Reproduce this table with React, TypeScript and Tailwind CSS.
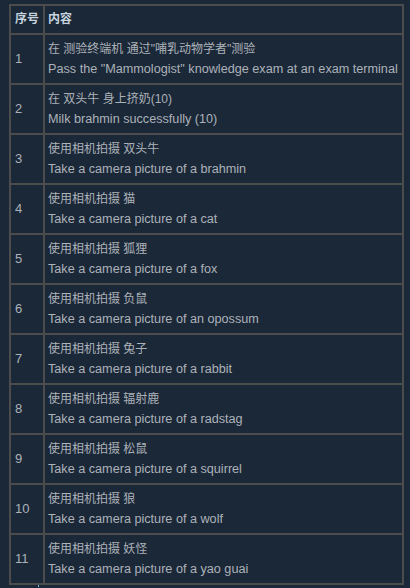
import React from "react";

const rows: [string, string, string][] = [
  ["1", "在 测验终端机 通过\"哺乳动物学者\"测验", "Pass the \"Mammologist\" knowledge exam at an exam terminal"],
  ["2", "在 双头牛 身上挤奶(10)", "Milk brahmin successfully (10)"],
  ["3", "使用相机拍摄 双头牛", "Take a camera picture of a brahmin"],
  ["4", "使用相机拍摄 猫", "Take a camera picture of a cat"],
  ["5", "使用相机拍摄 狐狸", "Take a camera picture of a fox"],
  ["6", "使用相机拍摄 负鼠", "Take a camera picture of an opossum"],
  ["7", "使用相机拍摄 兔子", "Take a camera picture of a rabbit"],
  ["8", "使用相机拍摄 辐射鹿", "Take a camera picture of a radstag"],
  ["9", "使用相机拍摄 松鼠", "Take a camera picture of a squirrel"],
  ["10", "使用相机拍摄 狼", "Take a camera picture of a wolf"],
  ["11", "使用相机拍摄 妖怪", "Take a camera picture of a yao guai"],
];

export default function App() {
  return (
    <div
      className="min-h-[588px] w-[410px] bg-[#1b2838] pl-[9px] pt-[4px] text-[#acb2b8]"
      style={{ fontFamily: '"Liberation Sans", Arial, "Noto Sans CJK SC", sans-serif' }}
    >
      <table className="border-separate border-spacing-0 border border-[#4c4c4c] text-[12px]">
        <thead>
          <tr>
            <th className="border border-[#4c4c4c] px-[4px] py-[4px] text-left font-bold leading-[19px] text-[#c6d4df]">序号</th>
            <th className="border border-[#4c4c4c] pl-[3px] pr-[4px] py-[4px] text-left font-bold leading-[19px] text-[#c6d4df]">内容</th>
          </tr>
        </thead>
        <tbody>
          {rows.map(([n, zh, en]) => (
            <tr key={n}>
              <td className="border border-[#4c4c4c] px-[4px] py-[4px] align-middle text-[13px] leading-[20px]">{n}</td>
              <td className="border border-[#4c4c4c] pl-[3px] pr-[4px] py-[4px] leading-[20px]">
                <div className="whitespace-nowrap">{zh}</div>
                <div className="whitespace-nowrap text-[12.65px]">{en}</div>
              </td>
            </tr>
          ))}
        </tbody>
      </table>
      <div className="ml-[29px] h-[2px] w-[1px] bg-[#66c0f4]" />
    </div>
  );
}
